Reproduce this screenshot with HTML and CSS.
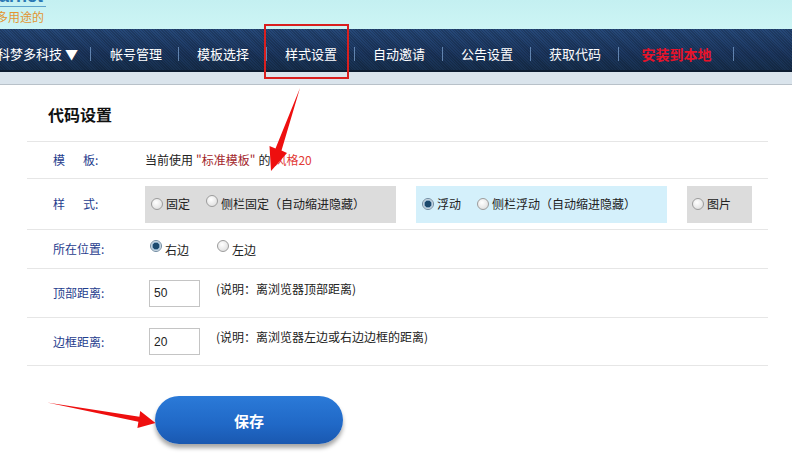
FILE: index.html
```html
<!DOCTYPE html>
<html lang="zh-CN">

<head>
    <meta charset="utf-8">
    <meta name="viewport" content="width=device-width, initial-scale=1.0">
    <title>代码设置</title>
    <link rel="stylesheet" href="styles.css">
</head>

<body>
    <header class="top">
        <div class="logo">
            <span class="logo-name">arnet</span>
            <span class="logo-sub">多用途的</span>
        </div>
    </header>
    <nav class="menu">
        <ul>
            <li class="first">科梦多科技 ▼</li>
            <li>帐号管理</li>
            <li>模板选择</li>
            <li>样式设置</li>
            <li>自动邀请</li>
            <li>公告设置</li>
            <li>获取代码</li>
            <li class="install">安装到本地</li>
        </ul>
    </nav>
    <div class="strip"></div>
    <main class="panel">
        <h2 class="title">代码设置</h2>
        <div class="row row-tpl">
            <span class="label">模<span class="gap"></span>板:</span>
            <div class="value">当前使用 <em class="quote">"标准模板"</em> 的 <em class="style-name">风格20</em></div>
        </div>
        <div class="row row-style">
            <span class="label">样<span class="gap"></span>式:</span>
            <div class="value options">
                <div class="opt-box grey wide">
                    <span class="radio"></span>固定
                    <span class="radio raised"></span>侧栏固定（自动缩进隐藏）
                </div>
                <div class="opt-box cyan wide">
                    <span class="radio checked"></span>浮动
                    <span class="radio"></span>侧栏浮动（自动缩进隐藏）
                </div>
                <div class="opt-box grey small">
                    <span class="radio"></span>图片
                </div>
            </div>
        </div>
        <div class="row row-pos">
            <span class="label">所在位置:</span>
            <div class="value">
                <span class="radio checked"></span><span class="low">右边</span>
                <span class="radio"></span><span class="low">左边</span>
            </div>
        </div>
        <div class="row row-input">
            <span class="label">顶部距离:</span>
            <div class="value">
                <input type="text" value="50" class="num">
                <span class="note">(说明：离浏览器顶部距离)</span>
            </div>
        </div>
        <div class="row row-input last">
            <span class="label">边框距离:</span>
            <div class="value">
                <input type="text" value="20" class="num">
                <span class="note">(说明：离浏览器左边或右边边框的距离)</span>
            </div>
        </div>
        <div class="actions">
            <button class="save">保存</button>
        </div>
    </main>

    <!-- annotation overlays -->
    <div class="mark-box"></div>
    <svg class="arrows" width="792" height="474" viewBox="0 0 792 474" aria-hidden="true">
        <polygon fill="#ee0f0f"
            points="300,88 281.5,150.5 287,153 271,171 269.5,146 275.5,148.5" />
        <polygon fill="#ee0f0f"
            points="47,402.5 139.4,416.7 140.2,411 155.5,423 137.4,428 138.4,421.7" />
    </svg>
</body>

</html>
```

FILE: styles.css
```css
*,
*::after,
*::before {
    margin: 0;
    padding: 0;
    box-sizing: border-box;
}

body {
    width: 792px;
    height: 474px;
    overflow: hidden;
    position: relative;
    background-color: #fff;
    font-family: "Liberation Sans", "Noto Sans CJK SC", sans-serif;
    font-size: 12px;
    color: #222;
}

/* header */
.top {
    height: 29px;
    background: linear-gradient(to bottom, #c4f0f1, #cdf5f5);
    overflow: hidden;
}

.logo {
    display: flex;
    flex-direction: column;
    width: 50px;
    margin-left: -4px;
    white-space: nowrap;
}

.logo-name {
    display: block;
    margin-top: -13px;
    padding-left: 3px;
    height: 20px;
    font-size: 18px;
    font-weight: 700;
    line-height: 18px;
    color: #2a78b4;
    border-bottom: 1px solid #5ea3cc;
}

.logo-sub {
    display: block;
    margin-top: 3px;
    font-size: 12px;
    line-height: 14px;
    color: #e39430;
    font-family: "Noto Sans CJK SC", sans-serif;
}

/* nav */
.menu {
    height: 43px;
    background-color: #1e3b63;
    background-image:
        repeating-linear-gradient(45deg, rgba(0, 0, 0, .18) 0 1px, transparent 1px 2px),
        linear-gradient(to bottom, #26497a, #1c3760 60%, #17304f);
    border-bottom: 2px solid #0d1c30;
    overflow: hidden;
}

.menu ul {
    display: flex;
    list-style: none;
    margin-left: -3px;
}

.menu li {
    width: 88px;
    height: 41px;
    padding-top: 8px;
    line-height: 34px;
    text-align: center;
    color: #fff;
    font-size: 13px;
    font-family: "Noto Sans CJK SC", sans-serif;
    white-space: nowrap;
    background: linear-gradient(#6183ae, #6183ae) right 18px / 1px 14px no-repeat;
}

.menu li.first {
    width: 94px;
    text-align: left;
}

.menu li:nth-child(2) {
    padding-left: 2px;
}

.menu li.install {
    width: 115px;
    color: #e8132a;
    font-weight: 700;
    font-size: 14px;
}

.strip {
    height: 13px;
    background-color: #dae4ec;
    border-bottom: 1px solid #b8c1c9;
}

/* panel */
.panel {
    width: 741px;
    margin-left: 27px;
}

.title {
    padding: 17px 0 0 21px;
    height: 56px;
    font-size: 16px;
    line-height: 24px;
    font-weight: 700;
    color: #111;
    font-family: "Noto Sans CJK SC", sans-serif;
}

.row {
    display: grid;
    grid-template-columns: 118px 1fr;
    align-items: center;
    border-top: 1px solid #e6e6e6;
}

.row.last {
    border-bottom: 1px solid #e6e6e6;
}

.row-tpl {
    height: 37px;
}

.row-style {
    height: 51px;
}

.row-pos {
    height: 39px;
}

.row-input {
    height: 49px;
}

.label {
    padding-left: 26px;
    color: #1f3d8e;
    font-family: "Noto Sans CJK SC", sans-serif;
    line-height: 16px;
}

.gap {
    display: inline-block;
    width: 18px;
}

.value {
    display: flex;
    align-items: center;
    font-family: "Noto Sans CJK SC", sans-serif;
    line-height: 16px;
}

.quote {
    font-style: normal;
    color: #a3262b;
    margin: 0 3px;
}

.style-name {
    font-style: normal;
    color: #e23a36;
    margin-left: 4px;
}

/* style options */
.options {
    gap: 20px;
}

.opt-box {
    display: flex;
    align-items: center;
    height: 37px;
    padding-left: 6px;
}

.opt-box.wide {
    width: 251px;
}

.opt-box.small {
    width: 65px;
    padding-left: 5px;
}

.grey {
    background-color: #dcdcdc;
}

.cyan {
    background-color: #d4f0fb;
}

.radio {
    display: inline-block;
    width: 12px;
    height: 12px;
    margin-right: 3px;
    border-radius: 50%;
    border: 1px solid #9c9c9c;
    background: radial-gradient(circle at 40% 35%, #fff, #d8d8d8);
    flex: none;
}

.radio + .radio,
.opt-box .radio:not(:first-child) {
    margin-left: 16px;
}

.radio.raised {
    position: relative;
    top: -3px;
}

.radio.checked {
    border-color: #6f8aa0;
    background: radial-gradient(circle, #1c4a6e 0 3px, #7ea3c0 3.5px, #eef3f6 5px);
}

.row-pos .value {
    padding-left: 5px;
}

.row-pos .radio {
    position: relative;
    top: -3px;
}

.row-pos .low {
    position: relative;
    top: 1px;
    margin-right: 28px;
}

/* inputs */
.row-input .value {
    align-items: flex-start;
    padding-left: 4px;
}

.num {
    width: 51px;
    height: 27px;
    border: 1px solid #c4c4c4;
    padding-left: 4px;
    font-family: "Liberation Sans", sans-serif;
    font-size: 12px;
    color: #222;
    outline: none;
}

.note {
    margin-left: 16px;
    margin-top: 1px;
    color: #222;
}

/* save */
.actions {
    padding: 30px 0 0 128px;
}

.save {
    width: 188px;
    height: 48px;
    border: none;
    border-radius: 24px;
    background: linear-gradient(to bottom, #2b7ad8, #2068c6 60%, #1a58b0);
    box-shadow: 0 4px 4px rgba(0, 0, 0, .35);
    color: #fff;
    font-size: 15px;
    font-weight: 700;
    font-family: "Noto Sans CJK SC", sans-serif;
    cursor: pointer;
}

/* annotations */
.mark-box {
    position: absolute;
    left: 264px;
    top: 24px;
    width: 85px;
    height: 55px;
    border: 2px solid #d91f1f;
    pointer-events: none;
}

.arrows {
    position: absolute;
    left: 0;
    top: 0;
    pointer-events: none;
}
```
